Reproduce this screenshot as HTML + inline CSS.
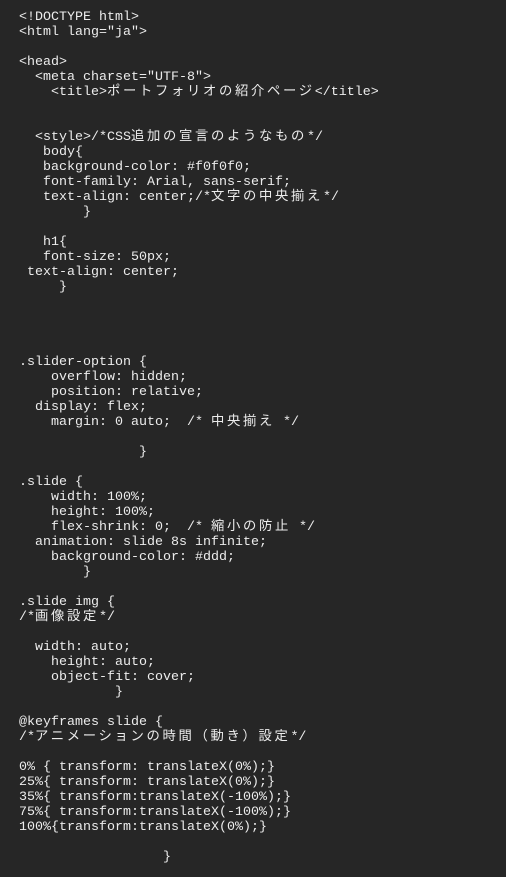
<!DOCTYPE html>
<html><head><meta charset="UTF-8"><style>
html,body{margin:0;padding:0;background:#262626;width:506px;height:877px;overflow:hidden}
.c{padding:10px 0 0 19px;font-family:"Liberation Mono","Noto Sans CJK JP",monospace;font-size:13.33px;color:#ececec}
.c div{height:15px;line-height:15px;overflow:visible;white-space:pre}
.j{display:inline-block;height:15px;vertical-align:top;position:relative;top:-3px;letter-spacing:2.67px;font-family:"Noto Sans CJK JP",sans-serif;font-size:13.33px;line-height:15px}
</style></head><body><div class="c">
<div>&lt;!DOCTYPE html&gt;</div>
<div>&lt;html lang="ja"&gt;</div>
<div></div>
<div>&lt;head&gt;</div>
<div>  &lt;meta charset="UTF-8"&gt;</div>
<div>    &lt;title&gt;<span class="j">ポートフォリオの紹介ページ</span>&lt;/title&gt;</div>
<div></div>
<div></div>
<div>  &lt;style&gt;/*CSS<span class="j">追加の宣言のようなもの</span>*/</div>
<div>   body{</div>
<div>   background-color: #f0f0f0;</div>
<div>   font-family: Arial, sans-serif;</div>
<div>   text-align: center;/*<span class="j">文字の中央揃え</span>*/</div>
<div>        }</div>
<div></div>
<div>   h1{</div>
<div>   font-size: 50px;</div>
<div> text-align: center;</div>
<div>     }</div>
<div></div>
<div></div>
<div></div>
<div></div>
<div>.slider-option {</div>
<div>    overflow: hidden;</div>
<div>    position: relative;</div>
<div>  display: flex;</div>
<div>    margin: 0 auto;  /* <span class="j">中央揃え</span> */</div>
<div></div>
<div>               }</div>
<div></div>
<div>.slide {</div>
<div>    width: 100%;</div>
<div>    height: 100%;</div>
<div>    flex-shrink: 0;  /* <span class="j">縮小の防止</span> */</div>
<div>  animation: slide 8s infinite;</div>
<div>    background-color: #ddd;</div>
<div>        }</div>
<div></div>
<div>.slide img {</div>
<div>/*<span class="j">画像設定</span>*/</div>
<div></div>
<div>  width: auto;</div>
<div>    height: auto;</div>
<div>    object-fit: cover;</div>
<div>            }</div>
<div></div>
<div>@keyframes slide {</div>
<div>/*<span class="j">アニメーションの時間（動き）設定</span>*/</div>
<div></div>
<div>0% { transform: translateX(0%);}</div>
<div>25%{ transform: translateX(0%);}</div>
<div>35%{ transform:translateX(-100%);}</div>
<div>75%{ transform:translateX(-100%);}</div>
<div>100%{transform:translateX(0%);}</div>
<div></div>
<div>                  }</div>
</div></body></html>
